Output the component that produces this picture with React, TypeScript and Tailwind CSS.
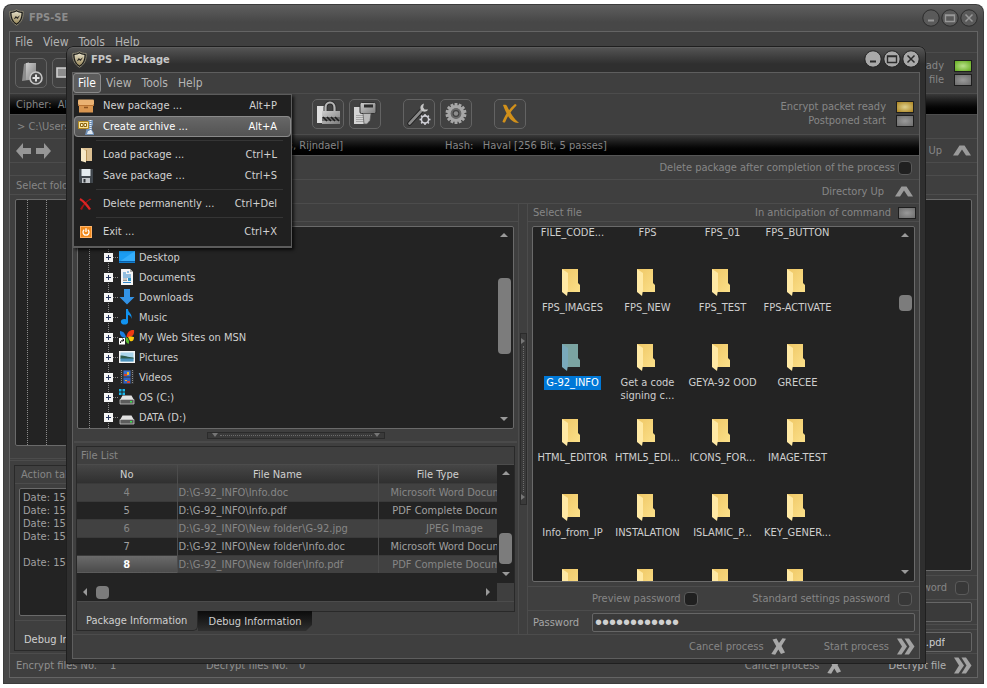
import type { ReactNode } from "react";

/* ---------- small shared pieces ---------- */

function Shield() {
  return (
    <svg width="15" height="17" viewBox="0 0 15 17" aria-hidden="true">
      <defs>
        <linearGradient id="shieldFill" x1="0" y1="0" x2="0" y2="1">
          <stop offset="0" stopColor="#e2dcc4" />
          <stop offset="1" stopColor="#9c8b5c" />
        </linearGradient>
      </defs>
      <path d="M7.500.7C5.600 2 3.600 2.400.8 2.400.4 8.600 2.600 13.600 7.500 16.300 12.400 13.600 14.600 8.600 14.200 2.400 11.400 2.400 9.400 2 7.500.7Z" fill="#1b1b19" stroke="#8d8874" strokeWidth="1" />
      <path d="M7.500 2.600C6 3.500 4.600 3.900 2.500 4 2.500 8.800 4 12.400 7.500 14.600 11 12.400 12.500 8.800 12.500 4 10.400 3.900 9 3.500 7.500 2.600Z" fill="url(#shieldFill)" />
      <path d="m4.500 10.500 2.300-3.500 1.500 1.300 2.700-2-2.300 3.700-1.500-1.100Z" fill="#2a2721" />
    </svg>
  );
}

function WindowButtons({ dim = false }: { dim?: boolean }) {
  const circle = dim ? "#5a5a5a" : "#a9a9a9";
  const ring = dim ? "#2c2c2c" : "#222222";
  const ink = dim ? "#989898" : "#2b2b2b";
  const shapes = [
    <path key="min" d="M6 11.500h6" stroke={ink} strokeWidth="2" />,
    <path key="max" d="M4.500 6h9v6.500h-9zM4.500 6.500h9" stroke={ink} strokeWidth="1.400" fill="none" />,
    <path key="close" d="m5.500 5.500 7 7m0-7-7 7" stroke={ink} strokeWidth="1.500" />,
  ];
  const names = ["Minimize", "Maximize", "Close"];
  return (
    <div className="ml-auto flex gap-px">
      {shapes.map((shape, i) => (
        <button key={names[i]} aria-label={names[i]} className="size-[18px]">
          <svg width="18" height="18" viewBox="0 0 18 18">
            <circle cx="9" cy="9" r="8.200" fill={circle} stroke={ring} />
            {shape}
          </svg>
        </button>
      ))}
    </div>
  );
}

function Led({ tone = "off" }: { tone?: "off" | "green" | "amber" }) {
  const tones = {
    off: "bg-[radial-gradient(#9a9a9a,#6c6c6c)]",
    green: "bg-[radial-gradient(#b9e08a,#62ab1c)]",
    amber: "bg-[radial-gradient(#dfd08e,#a9811c)]",
  };
  return <span className={"h-3 w-[18px] border border-[#1e1e1e] " + tones[tone]} />;
}

function ChevronUp() {
  return (
    <svg width="18" height="11" viewBox="0 0 18 11" fill="#9a9a9a" aria-hidden="true">
      <path d="M0 10.500 6.500.5h5l6.500 10h-5L9 4.500l-4 6z" />
    </svg>
  );
}

function DoubleChevron() {
  return (
    <svg width="18" height="17" viewBox="0 0 18 17" fill="#a2a2a2" aria-hidden="true">
      <path d="M0 .5h4.500L10 8.500l-5.500 8H0l5-8zM7.500.5H12l5.500 8-5.500 8H7.500l5-8z" />
    </svg>
  );
}

function CrossMark() {
  return (
    <svg width="15" height="17" viewBox="0 0 15 17" fill="#a8a8a8" aria-hidden="true">
      <path d="M1.500 1.500 5.500.5 8 5 11.500.3 15 .8 10.500 8 14 14.500 10 16 7.300 11.500 4.200 16.800.3 16 5.200 8.300Z" />
    </svg>
  );
}

function Tri({ dir }: { dir: "up" | "down" | "left" | "right" }) {
  const d = {
    up: "M0 6 4 2l4 4z",
    down: "M0 2h8L4 6z",
    left: "M6 0v8L2 4z",
    right: "M2 0v8l4-4z",
  }[dir];
  return (
    <svg width="8" height="8" viewBox="0 0 8 8" fill="#9a9a9a" aria-hidden="true" className="shrink-0">
      <path d={d} />
    </svg>
  );
}

function Tick({ label, dim = false }: { label: string; dim?: boolean }) {
  return (
    <label className={"flex items-center " + (dim ? "gap-2" : "gap-[3px]")}>
      {label}
      <input
        type="checkbox"
        className={"size-[14px] appearance-none rounded-[4px] border border-[#5a5a5a] " + (dim ? "bg-[#383838]" : "bg-[#202020]")}
      />
    </label>
  );
}

function ToolButton({ name, children }: { name: string; children?: ReactNode }) {
  return (
    <button aria-label={name} className="flex h-[30px] w-8 items-center justify-center rounded-[5px] border border-[#636363] bg-[#414141]">
      {children}
    </button>
  );
}

/* ---------- icons ---------- */

function Folder({ selected = false }: { selected?: boolean }) {
  return (
    <svg width="21" height="27" viewBox="0 0 21 27" aria-hidden="true">
      <defs>
        <linearGradient id="folderBack" x1="0" y1="0" x2="1" y2="1">
          <stop offset="0" stopColor="#efc765" />
          <stop offset="1" stopColor="#fbe08a" />
        </linearGradient>
      </defs>
      <path d="M0 0h16v14l2 2v7H0z" fill={selected ? "#7ba4a2" : "url(#folderBack)"} />
      <path d="M0 0l6 4v17l-1 6-5-4z" fill={selected ? "#79a9bb" : "#ffe9a4"} />
    </svg>
  );
}

const drive = (
  <>
    <path d="M3.500 6.500h9L15 11H1z" fill="#e2e2e2" />
    <path d="M1 10.500h14V15H1z" fill="#5c5c5c" stroke="#c4c4c4" strokeWidth=".8" />
    <path d="M11 12h2v1.500h-2z" fill="#39e04c" />
  </>
);

const treeIcons: Record<string, ReactNode> = {
  Desktop: (
    <>
      <path d="M0 2h16v12H0z" fill="#1b9cf2" />
      <path d="M0 13 16 2v11z" fill="#35aefc" />
      <path d="M0 12h16v1.500H0z" fill="#0a5ea8" />
    </>
  ),
  Documents: (
    <>
      <path d="M2 0h9l3 3v13H2z" fill="#f4f4f4" />
      <path d="M11 0v3h3z" fill="#aaa" />
      <path d="M4 4h3M8 3h2M4 6h8M4 8h8M4 13.500h8" stroke="#2f86c8" />
      <path d="M4 10h4M4 11.500h4" stroke="#999" />
      <path d="M9 9h3v3H9z" fill="#2a94c8" />
    </>
  ),
  Downloads: <path d="M5 0h6v8h4.500L8 15.500.500 8H5z" fill="#3393e6" />,
  Music: (
    <>
      <path d="M7 0h2c0 4 4.500 4 3.500 10-.5-3-2-4-3.500-4v7H7z" fill="#1193f0" />
      <ellipse cx="5.500" cy="12.800" rx="3.600" ry="2.800" fill="#1193f0" />
    </>
  ),
  "My Web Sites on MSN": (
    <>
      <path d="M7.500 8C8 3 11 .5 15 1c.5 4-1 6-4 7z" fill="#f03a12" />
      <path d="M7 8C6 4 4 2 1 2c-.5 4 1 6 5 7z" fill="#1d7fe0" />
      <path d="M9 8c3-1 5 0 6 0 0 4-2 5-4 4z" fill="#ffca0a" />
      <path d="M7 8c2 1 4 4 2.500 7-2-1-3.500-3-2.500-7z" fill="#55b92e" />
      <path d="M0 9h6v6.500H0z" fill="#fff" />
      <path d="M1.500 14c0-2 1-2.800 3-2.800M3.500 9.800 5 11.200l-1.500 1.300" stroke="#000" fill="none" />
    </>
  ),
  Pictures: (
    <>
      <path d="M0 2h16v12H0z" fill="#f4f4f4" />
      <path d="M1.500 3.500h13v9h-13z" fill="#a9d4ea" />
      <path d="M1.500 6.500c4 0 7 1.500 13 2V10h-13z" fill="#2f5c4c" />
      <path d="M1.500 9.500h13v3h-13z" fill="#4d93bd" />
    </>
  ),
  Videos: (
    <>
      <path d="M1 1h14v14H1z" fill="#303030" />
      <path d="M2.500 1v14M13.500 1v14" stroke="#8a8a8a" strokeDasharray="1 1" />
      <path d="M4.500 1.500h7v6h-7z" fill="#3b6fd0" />
      <path d="M4.500 8.500h7v6h-7z" fill="#2f62c4" />
      <path d="M5 5h3v2H5zM8 12h3v2H8z" fill="#d8422a" />
      <path d="M8 3h2v3H8zM6 11h2v1H6z" fill="#f0b822" />
    </>
  ),
  "OS (C:)": (
    <>
      {drive}
      <path d="M0 0h2.500v2.500H0zM3.500 0H6v2.500H3.500zM0 3.500h2.500V6H0zM3.500 3.500H6V6H3.500z" fill="#17b5ea" />
    </>
  ),
  "DATA (D:)": drive,
};

const menuIcons: Record<string, ReactNode> = {
  "New package ...": (
    <>
      <rect x="0" y="1.500" width="16" height="5.500" rx="1" fill="#eab273" />
      <path d="M1 7h14v7.500H1z" fill="#d99650" />
      <path d="M0 7.500h16" stroke="#b87333" />
      <path d="M6 9.500h4" stroke="#8f5420" strokeWidth="1.400" />
    </>
  ),
  "Create archive ...": (
    <>
      <path d="M10 1h5v5l-1 1v4l2 3v2H7l1-4z" fill="#6f8fb5" />
      <path d="M12.500 1v11" stroke="#eef3f8" strokeWidth="2" strokeDasharray="1 1" />
      <path d="M10 12h4l1 3H9z" fill="#dfe7ef" />
      <path d="M.5 2.500h10v7H.5z" fill="#f8e29a" stroke="#b38a22" />
      <path d="M2.500 4.500h2.500v3H2.500zM6 4.500h2.500v3H6zM5 6h1" stroke="#8a6510" fill="#fff6d0" />
    </>
  ),
  "Load package ...": (
    <>
      <path d="M3 1h11v13H3z" fill="#dcc092" />
      <path d="M3 1l5 3v11.500L3 14z" fill="#f7e8c6" />
      <path d="M8.500 3v11" stroke="#b8945a" />
    </>
  ),
  "Save package ...": (
    <>
      <path d="M1 1h14v14H2l-1-1z" fill="#40464c" />
      <path d="M3.500 1h9v7h-9z" fill="#e4eaee" />
      <path d="M4 10h8v5H4z" fill="#c2c6ca" />
      <path d="M5.500 11h2v3.500h-2z" fill="#2c3034" />
    </>
  ),
  "Delete permanently ...": (
    <>
      <path d="M13.500 3.500C9 5 6 9 4 14l-2-1c2-4 6-8 10-10.500z" fill="#a01212" />
      <path d="M2.500 2c5 3 8 7 10.500 11l-2 1C8 10 5 6 1.500 4z" fill="#de2424" />
    </>
  ),
  "Exit ...": (
    <>
      <rect x="2.500" y="2.500" width="11" height="11" fill="#f08a1e" stroke="#ffb469" />
      <path d="M6.200 5.800a3 3 0 1 0 3.600 0M8 4.200v3.800" stroke="#fff" strokeWidth="1.300" fill="none" />
    </>
  ),
};

function Icon16({ children }: { children: ReactNode }) {
  return (
    <svg width="16" height="16" viewBox="0 0 16 16" aria-hidden="true" className="shrink-0">
      {children}
    </svg>
  );
}

function Art({ children }: { children: ReactNode }) {
  return (
    <svg width="26" height="26" viewBox="0 0 26 26" aria-hidden="true">
      <defs>
        <linearGradient id="metal" x1="0" y1="0" x2="1" y2="1">
          <stop offset="0" stopColor="#cecece" />
          <stop offset="1" stopColor="#7c7c7c" />
        </linearGradient>
      </defs>
      {children}
    </svg>
  );
}

function Cog({ cx, cy, r, teeth, fill, hole }: { cx: number; cy: number; r: number; teeth: number; fill: string; hole: number }) {
  return (
    <g>
      {Array.from({ length: teeth }, (_, i) => (
        <rect key={i} x={cx - r * 0.14} y={cy - r} width={r * 0.28} height={r} fill={fill} transform={`rotate(${(360 / teeth) * i} ${cx} ${cy})`} />
      ))}
      <circle cx={cx} cy={cy} r={r * 0.8} fill={fill} />
      <circle cx={cx} cy={cy} r={hole} fill="#414141" />
    </g>
  );
}

/* ---------- package window ---------- */

type Entry = { label: string; keys: string; active?: boolean };
const fileMenu: Entry[][] = [
  [
    { label: "New package ...", keys: "Alt+P" },
    { label: "Create archive ...", keys: "Alt+A", active: true },
  ],
  [
    { label: "Load package ...", keys: "Ctrl+L" },
    { label: "Save package ...", keys: "Ctrl+S" },
  ],
  [{ label: "Delete permanently ...", keys: "Ctrl+Del" }],
  [{ label: "Exit ...", keys: "Ctrl+X" }],
];

function FileMenu() {
  return (
    <div role="menu" className="absolute top-[21px] left-0 z-10 w-[219px] border border-b-2 border-[#5c5c5c] bg-[#202020] pb-1 text-[#d2d2d2] shadow-[2px_2px_3px_rgba(0,0,0,0.7)]">
      {fileMenu.map((group, g) => (
        <div key={g}>
          {g > 0 && <hr className="mt-[3px] mr-2 mb-[3px] ml-[22px] border-[#353535]" />}
          {group.map((e) => (
            <button
              key={e.label}
              role="menuitem"
              className={
                "flex h-[21px] w-full items-center gap-[9px] px-1 pr-[14px] " +
                (e.active ? "rounded-[4px] bg-linear-to-b from-[#686868] to-[#525252] text-white outline-1 -outline-offset-1 outline-[#8a8a8a]" : "")
              }
            >
              <Icon16>{menuIcons[e.label]}</Icon16>
              {e.label}
              <span className="ml-auto">{e.keys}</span>
            </button>
          ))}
        </div>
      ))}
    </div>
  );
}

function Thumb({ className }: { className: string }) {
  return <div className={"shrink-0 rounded-[4px] bg-[#7c7c7c] " + className} />;
}

function FolderTree() {
  return (
    <div className="mx-1 mt-1 flex min-h-0 flex-1 overflow-hidden rounded-[2px] border border-[#6a6a6a] bg-[#232323]">
      <div className="ml-[11px] flex min-w-0 flex-1 border-l border-dotted border-[#8a8a8a]">
        <div className="ml-[18px] border-l border-dotted border-[#8a8a8a]" />
        <ul className="-ml-[5px] pt-5 text-[#cfcfcf]">
          {Object.keys(treeIcons).map((name) => (
            <li key={name} className="flex h-5 items-center">
              <button aria-label={"Expand " + name} className="size-[9px] bg-[#f4f4f4]">
                <svg width="9" height="9" viewBox="0 0 9 9" stroke="#27365e">
                  <path d="M2 4.500h5M4.500 2v5" />
                </svg>
              </button>
              <span className="mr-px w-[5px] border-t border-dotted border-[#8a8a8a]" />
              <Icon16>{treeIcons[name]}</Icon16>
              <span className="ml-1">{name}</span>
            </li>
          ))}
        </ul>
      </div>
      <div className="flex w-[18px] flex-col items-center pt-1 pb-[5px]">
        <Tri dir="up" />
        <div className="grow-[39]" />
        <Thumb className="h-[76px] w-[13px]" />
        <div className="grow-[62]" />
        <Tri dir="down" />
      </div>
    </div>
  );
}

const rows = [
  { no: 4, name: "D:\\G-92_INFO\\Info.doc", type: "Microsoft Word Document" },
  { no: 5, name: "D:\\G-92_INFO\\Info.pdf", type: "PDF Complete Document" },
  { no: 6, name: "D:\\G-92_INFO\\New folder\\G-92.jpg", type: "JPEG Image" },
  { no: 7, name: "D:\\G-92_INFO\\New folder\\Info.doc", type: "Microsoft Word Document" },
  { no: 8, name: "D:\\G-92_INFO\\New folder\\Info.pdf", type: "PDF Complete Document" },
];

function FileTable() {
  return (
    <div className="mx-[3px] mt-[3px] border border-[#292929] pb-[9px]">
      <h2 className="h-[18px] border-b border-[#4c4c4c] pl-1 leading-[17px]">File List</h2>
      <div className="flex border-b border-[#4c4c4c]">
        <div className="flex min-w-0 flex-1 flex-col bg-[#232323]">
          <table className="w-full table-fixed border-collapse">
            <thead>
              <tr className="h-[18px] bg-linear-to-b from-[#464646] to-[#303030] text-[#d0d0d0]">
                <th className="w-[100px] border-r border-[#4c4c4c] p-0 pt-px font-normal">No</th>
                <th className="w-[201px] border-r border-[#4c4c4c] p-0 pt-px font-normal">File Name</th>
                <th className="p-0 pt-px font-normal">File Type</th>
              </tr>
            </thead>
            <tbody>
              {rows.map((r) => (
                <tr key={r.no} className="h-[18px] border-t border-[#3a3a3a] text-[#a0a0a0] odd:bg-[#414141] odd:text-[#868686]">
                  <td
                    className={
                      "border-r border-[#4c4c4c] p-0 text-center " +
                      (r.no === 8 ? "bg-linear-to-b from-[#6b6b6b] to-[#4b4b4b] font-bold text-white" : "")
                    }
                  >
                    {r.no}
                  </td>
                  <td className="overflow-hidden border-r border-[#4c4c4c] p-0 pl-px whitespace-nowrap">{r.name}</td>
                  <td className="overflow-hidden p-0 whitespace-nowrap">
                    <div className="w-[152px] text-center">{r.type}</div>
                  </td>
                </tr>
              ))}
            </tbody>
          </table>
          <div className="mt-auto flex h-[18px] items-center pr-[5px] pl-1">
            <Tri dir="left" />
            <Thumb className="ml-[7px] size-[13px]" />
            <div className="flex-1" />
            <Tri dir="right" />
          </div>
        </div>
        <div className="flex w-[17px] flex-col">
          <div className="flex h-[118px] flex-col items-center bg-[#232323] pt-1 pb-[5px]">
            <Tri dir="up" />
            <div className="flex-1" />
            <Thumb className="mb-[6px] h-[31px] w-[13px]" />
            <Tri dir="down" />
          </div>
          <div className="h-[18px] bg-[#3f3f3f]" />
        </div>
      </div>
    </div>
  );
}

const folders = [
  "FILE_CODE...", "FPS", "FPS_01", "FPS_BUTTON",
  "FPS_IMAGES", "FPS_NEW", "FPS_TEST", "FPS-ACTIVATE",
  "G-92_INFO", "Get a code signing c...", "GEYA-92 OOD", "GRECEE",
  "HTML_EDITOR", "HTML5_EDI...", "ICONS_FOR...", "IMAGE-TEST",
  "Info_from_IP", "INSTALATION", "ISLAMIC_P...", "KEY_GENER...",
  "", "", "", "",
];

function FolderGrid() {
  return (
    <div className="mx-1 my-1 flex min-h-0 flex-1 overflow-hidden rounded-[2px] border border-[#6a6a6a] bg-[#232323]">
      <ul className="-mt-[39px] grid flex-1 auto-rows-[75px] grid-cols-[repeat(4,75px)] pl-[2px] text-[#cfcfcf]">
        {folders.map((name, i) => (
          <li key={i} className="flex flex-col items-center gap-[5px] pt-[6px] text-center leading-[13px]">
            <Folder selected={name === "G-92_INFO"} />
            <span className={name === "G-92_INFO" ? "bg-[#0078d7] px-[2px] pb-px text-white" : ""}>{name}</span>
          </li>
        ))}
      </ul>
      <div className="flex w-[18px] flex-col items-center pt-1 pb-[5px]">
        <Tri dir="up" />
        <div className="grow-[56]" />
        <Thumb className="h-4 w-[13px]" />
        <div className="grow-[257]" />
        <Tri dir="down" />
      </div>
    </div>
  );
}

function PackageWindow() {
  return (
    <section
      aria-label="FPS - Package"
      className="absolute top-[46px] right-[61px] bottom-[24px] left-[66px] flex flex-col overflow-hidden rounded-t-[7px] bg-[#2f2f2f] bg-linear-to-b from-[#585858] via-[#2f2f2f] via-[18px] to-[#2f2f2f] px-[6px] pb-[5px] shadow-[inset_0_0_0_1px_#1f1f1f,inset_0_2px_0_0_#5e5e5e]"
    >
      <header className="flex h-[26px] items-center gap-[4px]">
        <Shield />
        <h1 className="text-[11px] font-bold text-[#c6c6c6]">FPS - Package</h1>
        <WindowButtons />
      </header>

      <div className="flex min-h-0 flex-1 flex-col border border-[#5e5e5e] bg-[#3f3f3f]">
        <nav className="relative flex h-[21px] border-b border-[#4c4c4c] text-[#b4b4b4]">
          {["File", "View", "Tools", "Help"].map((m) => (
            <button
              key={m}
              className={"px-[4px] text-[12px] " + (m === "File" ? "rounded-[3px] border border-[#8a8a8a] bg-[#5c5c5c] text-white" : "border border-transparent")}
            >
              {m}
            </button>
          ))}
          <FileMenu />
        </nav>

        <div className="flex h-[41px] shrink-0 items-center border-b border-[#4c4c4c] pr-[5px] pl-[239px]">
          <div className="flex gap-[5px]">
            <ToolButton name="Encrypt package">
              <Art>
                <path d="M2 5h8v17H2z" fill="#dedede" />
                <path d="M10.500 12V6.500a4.500 5 0 0 1 9 0V12" fill="none" stroke="#2e2e2e" strokeWidth="4" />
                <path d="M10.500 12V6.500a4.500 5 0 0 1 9 0V12" fill="none" stroke="#b5b5b5" strokeWidth="2.200" />
                <rect x="7" y="10" width="18" height="13" fill="url(#metal)" />
                <path d="M7 16h18v4H7z" fill="#6a6a6a" />
                <path d="m8 16 4 4m0-4 4 4m0-4 4 4m0-4 4 4" stroke="#1d1d1d" strokeWidth="1.600" />
              </Art>
            </ToolButton>
            <ToolButton name="Save package">
              <Art>
                <path d="M2 6h11v17H2z" fill="#d4d4d4" />
                <path d="M4 14.500h8M4 16.500h8M4 18.500h8M4 20.500h8" stroke="#a4a4a4" />
                <rect x="8" y="1.500" width="16" height="11" rx="1.500" fill="url(#metal)" stroke="#303030" />
                <path d="M12 3.500h9v3h-9z" fill="#2d2d2d" />
                <path d="M11 12.500h8l-1 7-3 3.500h-3z" fill="#bababa" stroke="#555" strokeWidth=".7" />
              </Art>
            </ToolButton>
          </div>
          <div className="ml-[22px] flex gap-[5px]">
            <ToolButton name="Tools">
              <Art>
                <path d="M3.500 22.500 16 9" stroke="#1f1f1f" strokeWidth="4.500" strokeLinecap="round" />
                <path d="M3.500 22.500 16 9" stroke="#8a8a8a" strokeWidth="2.600" strokeLinecap="round" />
                <path d="M18 2.500c-3 .8-4.500 4-3 6.500 1.700 2.400 5.500 2.200 7.200-.6l-3.600.2-1.500-2.400z" fill="#c4c4c4" />
                <Cog cx={19} cy={18.5} r={5.5} teeth={8} fill="#cfcfd6" hole={2.8} />
              </Art>
            </ToolButton>
            <ToolButton name="Settings">
              <Art>
                <Cog cx={13} cy={12.5} r={10.5} teeth={14} fill="#a6a6a6" hole={5} />
                <circle cx="13" cy="12.500" r="4.400" fill="none" stroke="#686868" strokeWidth="2" />
                <circle cx="13" cy="12.500" r="2.200" fill="#8e8e8e" />
              </Art>
            </ToolButton>
          </div>
          <div className="ml-[22px]">
            <ToolButton name="Close package">
              <Art>
                <path d="M6 4c2-.5 3.500 0 4 1 3 6 6 12 12 17-5 .2-9-3.500-11-7C9 11.500 7.500 8 6 4Z" fill="#d1901a" />
                <path d="M18 3c1 .2 1.600.6 1.500 1.500C15 9 11 14 8 21.500c-1.200.3-2.300 0-2.500-1C8 14 12 8 18 3Z" fill="#d1901a" />
              </Art>
            </ToolButton>
          </div>
          <div className="ml-auto grid grid-cols-[auto_18px] items-center gap-x-[10px] gap-y-[2px] text-right leading-[12px]">
            <span>Encrypt packet ready</span>
            <Led tone="amber" />
            <span>Postponed start</span>
            <Led />
          </div>
        </div>

        <div className="flex h-[21px] shrink-0 items-center border-b border-[#555] bg-linear-to-b from-[#3a3a3a] to-black">
          <span className="w-[270px] text-right whitespace-pre">Cipher:   Multi [Serpent, Keys, Rijndael]</span>
          <span className="ml-[102px] whitespace-pre">Hash:   Haval [256 Bit, 5 passes]</span>
        </div>

        <div className="flex h-6 shrink-0 items-center justify-end border-b border-[#4c4c4c] pr-[7px]">
          <Tick label="Delete package after completion of the process" />
        </div>
        <div className="flex h-6 shrink-0 items-center justify-end border-b border-[#4c4c4c] pr-[6px]">
          <button className="flex items-center gap-[11px]">
            Directory Up
            <ChevronUp />
          </button>
        </div>

        <div className="flex min-h-0 flex-1 border-b border-[#4c4c4c]">
          <div className="flex w-[446px] shrink-0 flex-col border-r border-[#4c4c4c]">
            <div className="h-[18px] shrink-0 border-b border-[#4c4c4c]" />
            <FolderTree />
            <div className="mx-px flex h-[14px] shrink-0 items-center justify-center border-b-2 border-[#4a4a4a]">
              <div className="flex h-[7px] w-[178px] items-center justify-between border border-[#2b2b2b] bg-[#3a3a3a] px-1">
                <svg width="6" height="4" viewBox="0 0 6 4" fill="#767676"><path d="M0 0h6L3 4z" /></svg>
                <span className="w-[152px] border-t border-dotted border-[#6c6c6c]" />
                <svg width="6" height="4" viewBox="0 0 6 4" fill="#767676"><path d="M0 0h6L3 4z" /></svg>
              </div>
            </div>
            <FileTable />
            <div role="tablist" className="mx-[3px] mb-[3px] -mt-px flex h-[20px] shrink-0 text-[#cfcfcf]">
              <button role="tab" aria-selected="true" className="w-[122px] rounded-br-[5px] border border-t-0 border-[#292929] bg-[#3f3f3f] pl-[9px] text-left">
                Package Information
              </button>
              <button
                role="tab"
                aria-selected="false"
                className="w-[114px] bg-linear-to-b from-[#0c0c0c] to-[#303030] [clip-path:polygon(0_0,100%_0,100%_14px,108px_100%,0_100%)]"
              >
                Debug Information
              </button>
            </div>
          </div>

          <div className="flex w-[9px] shrink-0 items-center justify-center border-r border-[#4c4c4c]">
            <div className="flex h-[172px] w-[7px] flex-col items-center justify-between border border-[#2b2b2b] bg-[#3a3a3a] py-1">
              <svg width="4" height="6" viewBox="0 0 4 6" fill="#767676"><path d="M0 0v6l4-3z" /></svg>
              <span className="h-[146px] border-l border-dotted border-[#6c6c6c]" />
              <svg width="4" height="6" viewBox="0 0 4 6" fill="#767676"><path d="M0 0v6l4-3z" /></svg>
            </div>
          </div>

          <div className="flex min-w-0 flex-1 flex-col">
            <div className="flex h-[18px] shrink-0 items-center border-b border-[#4c4c4c] pr-[3px] pl-[5px]">
              <h2>Select file</h2>
              <span className="mr-[7px] ml-auto">In anticipation of command</span>
              <Led />
            </div>
            <FolderGrid />
            <div className="flex h-[25px] shrink-0 items-center justify-between border-y border-[#4c4c4c] pr-[7px] pl-[64px]">
              <Tick label="Preview password" />
              <Tick label="Standard settings password" dim />
            </div>
            <div className="flex h-[23px] shrink-0 items-center pr-1 pl-[5px] text-[#a6a6a6]">
              <label htmlFor="pw" className="w-[59px]">Password</label>
              <input
                id="pw"
                type="password"
                defaultValue="correcthorse"
                className="h-[19px] min-w-0 flex-1 rounded-[2px] border border-[#666] bg-[#3a3a3a] px-[2px] font-['Liberation_Sans',sans-serif] text-[20px] leading-[17px] text-[#d0d0d0] outline-none"
              />
            </div>
          </div>
        </div>

        <footer className="flex h-[23px] shrink-0 items-center justify-end pr-[4px]">
          <button className="flex items-center gap-[7px]">
            Cancel process
            <CrossMark />
          </button>
          <button className="ml-[38px] flex items-center gap-[8px]">
            Start process
            <DoubleChevron />
          </button>
        </footer>
      </div>
    </section>
  );
}

/* ---------- main window behind ---------- */

function MainWindow() {
  return (
    <section
      aria-label="FPS-SE"
      className="absolute inset-x-[3px] inset-y-1 flex flex-col overflow-hidden rounded-t-[8px] bg-[#474747] bg-linear-to-b from-[#606060] via-[#474747] via-[18px] to-[#474747] px-[6px] pb-[6px] shadow-[inset_0_0_0_1px_#3c3c3c]"
    >
      <header className="flex h-[27px] shrink-0 items-center gap-[5px]">
        <Shield />
        <h1 className="text-[11px] font-bold text-[#8c8c8c]">FPS-SE</h1>
        <WindowButtons dim />
      </header>
      <div className="flex min-h-0 flex-1 flex-col border border-[#646464] bg-[#3f3f3f]">
        <nav className="flex h-[21px] shrink-0 border-b border-[#4c4c4c] text-[12px] text-[#b4b4b4]">
          {["File", "View", "Tools", "Help"].map((m) => (
            <button key={m} className="px-[5px]">{m}</button>
          ))}
        </nav>
        <div className="flex h-[41px] shrink-0 items-center gap-[5px] border-b border-[#4c4c4c] px-[5px]">
          <ToolButton name="New">
            <Art>
              <path d="M4 21 6 4l5-2v18z" fill="#8c8c8c" />
              <path d="M8 3h10v17H8z" fill="url(#metal)" />
              <circle cx="18" cy="18" r="6" fill="#4a4a4a" stroke="#c4c4c4" strokeWidth="1.600" />
              <path d="M18 14.500v7M14.500 18h7" stroke="#e0e0e0" strokeWidth="2" />
            </Art>
          </ToolButton>
          <ToolButton name="Open">
            <Art>
              <path d="M2 8h22v9H2z" fill="#8c8c8c" stroke="#d0d0d0" strokeWidth="1.600" />
            </Art>
          </ToolButton>
          <div className="ml-auto grid grid-cols-[auto_18px] items-center gap-x-[10px] gap-y-[2px] text-right leading-[12px]">
            <span>Encrypt ready</span>
            <Led tone="green" />
            <span>Postponed file</span>
            <Led />
          </div>
        </div>
        <div className="flex h-[21px] shrink-0 items-center border-b border-[#4c4c4c] bg-linear-to-b from-[#3a3a3a] to-black pl-[6px] whitespace-pre">
          Cipher:  AES
        </div>
        <div className="flex h-6 shrink-0 items-center border-b border-[#4c4c4c] pl-[7px]">&gt; C:\Users</div>
        <div className="flex h-6 shrink-0 items-center gap-[5px] border-b border-[#4c4c4c] pr-[6px] pl-[6px]">
          <button aria-label="Back">
            <svg width="15" height="16" viewBox="0 0 15 16" fill="#969696"><path d="M0 8 7 0v5h8v6H7v5z" /></svg>
          </button>
          <button aria-label="Forward">
            <svg width="15" height="16" viewBox="0 0 15 16" fill="#969696"><path d="M15 8 8 0v5H0v6h8v5z" /></svg>
          </button>
          <button className="ml-auto flex items-center gap-[11px]">
            Directory Up
            <ChevronUp />
          </button>
        </div>
        <div className="h-[13px] shrink-0 border-b border-[#4c4c4c]" />
        <div className="flex min-h-0 flex-1 border-b border-[#4c4c4c]">
          <div className="flex w-[446px] flex-col">
            <h2 className="h-[19px] shrink-0 border-b border-[#4c4c4c] pl-[6px] leading-[19px]">Select folder</h2>
            <div className="mx-[5px] mt-1 flex min-h-0 flex-1 rounded-[2px] border border-[#6a6a6a] bg-[#232323]">
              <div className="ml-[11px] w-[20px] border-x border-dotted border-[#8a8a8a]" />
            </div>
            <div className="mt-[12px] h-[3px] shrink-0 border-y border-[#4c4c4c]" />
            <div className="m-1 mb-[2px] h-[186px] shrink-0 border border-[#292929]">
              <h2 className="h-[18px] border-b border-[#4c4c4c] pl-[6px] leading-[17px]">Action taken</h2>
              <div className="mx-1 mt-1 h-[128px] rounded-[2px] border border-[#6a6a6a] bg-[#232323] px-[3px] py-[2px] leading-[13px] text-[#a0a0a0]">
                <p>Date: 15</p>
                <p>Date: 15</p>
                <p>Date: 15</p>
                <p>Date: 15</p>
                <p className="mt-[13px]">Date: 15</p>
              </div>
              <p className="mt-1 border-t border-[#4c4c4c] pt-[11px] pl-[9px] text-[#cfcfcf]">Debug Information</p>
            </div>
          </div>
          <div className="flex flex-1 flex-col">
            <div className="h-[19px] shrink-0 border-b border-[#4c4c4c]" />
            <div className="mt-1 mr-[5px] min-h-0 flex-1 rounded-[2px] border border-[#6a6a6a] bg-[#232323]" />
            <div className="mt-1 flex h-[25px] shrink-0 items-center justify-end border-y border-[#4c4c4c] pr-2">
              <Tick label="Preview password" dim />
            </div>
            <input aria-label="Password" className="mt-[2px] mr-[5px] h-[20px] rounded-[2px] border border-[#666] bg-[#3a3a3a]" />
            <div className="mt-[2px] h-[6px] shrink-0 border-y border-[#4c4c4c]" />
            <input
              aria-label="Target file"
              defaultValue="Info.pdf"
              className="mt-[2px] mr-[5px] mb-px h-[20px] rounded-[2px] border border-[#666] bg-[#3a3a3a] pr-[26px] text-right text-[#cfcfcf]"
            />
          </div>
        </div>
        <footer className="flex h-[23px] shrink-0 items-center pr-[5px] pl-[6px] text-[#8f8f8f]">
          <span className="w-[94px]">Encrypt files No.</span>
          <span className="w-[96px]">1</span>
          <span className="w-[93px]">Decrypt files No.</span>
          <span>0</span>
          <button className="ml-auto flex items-center gap-[7px]">
            Cancel process
            <CrossMark />
          </button>
          <button className="ml-[47px] flex items-center gap-[8px] text-[#b0b0b0]">
            Decrypt file
            <DoubleChevron />
          </button>
        </footer>
      </div>
    </section>
  );
}

export default function App() {
  return (
    <main className="relative h-screen min-h-[600px] overflow-hidden bg-white font-['DejaVu_Sans_Condensed','DejaVu_Sans',sans-serif] text-[11px] leading-[15px] text-[#868686]">
      <MainWindow />
      <PackageWindow />
    </main>
  );
}
